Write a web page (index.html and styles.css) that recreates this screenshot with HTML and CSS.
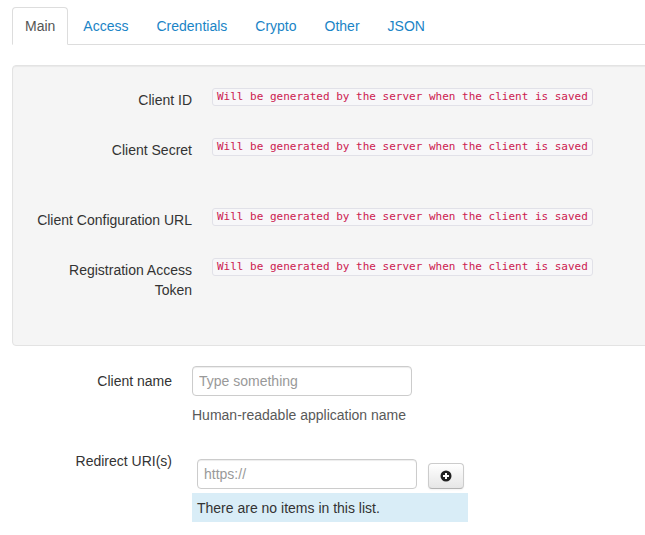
FILE: index.html
```html
<!DOCTYPE html>
<html>
<head>
<meta charset="utf-8">
<link rel="stylesheet" href="styles.css">
</head>
<body>
<div class="page">
  <ul class="tabs">
    <li class="tab active"><a>Main</a></li>
    <li class="tab"><a>Access</a></li>
    <li class="tab"><a>Credentials</a></li>
    <li class="tab"><a>Crypto</a></li>
    <li class="tab"><a>Other</a></li>
    <li class="tab"><a>JSON</a></li>
  </ul>

  <div class="well">
    <div class="row">
      <label class="label">Client ID</label>
      <div class="controls"><code class="code">Will be generated by the server when the client is saved</code></div>
    </div>
    <div class="row row-gap">
      <label class="label">Client Secret</label>
      <div class="controls"><code class="code">Will be generated by the server when the client is saved</code></div>
    </div>
    <div class="row">
      <label class="label">Client Configuration URL</label>
      <div class="controls"><code class="code">Will be generated by the server when the client is saved</code></div>
    </div>
    <div class="row row-last">
      <label class="label">Registration Access Token</label>
      <div class="controls"><code class="code">Will be generated by the server when the client is saved</code></div>
    </div>
  </div>

  <div class="row form-row">
    <label class="label">Client name</label>
    <div class="controls">
      <input class="input" type="text" placeholder="Type something">
      <p class="help">Human-readable application name</p>
    </div>
  </div>

  <div class="row form-row">
    <label class="label">Redirect URI(s)</label>
    <div class="controls">
      <div class="add-row">
        <input class="input" type="text" placeholder="https://">
        <button class="btn" type="button" aria-label="Add">
          <svg width="12" height="12" viewBox="0 0 12 12"><circle cx="6" cy="6" r="5.5" fill="#222"/><path d="M6 3v6M3 6h6" stroke="#fff" stroke-width="2"/></svg>
        </button>
      </div>
      <div class="alert">There are no items in this list.</div>
    </div>
  </div>
</div>
</body>
</html>
```

FILE: styles.css
```css
html, body {
  margin: 0;
  padding: 0;
  overflow: hidden;
  background: #fff;
}
body {
  font-family: "Liberation Sans", Arial, sans-serif;
  font-size: 14px;
  line-height: 20px;
  color: #333;
}
.page {
  width: 720px;
  padding: 7px 0 0 12px;
}
.tabs {
  display: flex;
  list-style: none;
  margin: 0 0 20px;
  padding: 0;
  border-bottom: 1px solid #ddd;
}
.tab {
  margin-bottom: -1px;
}
.tab a {
  display: block;
  padding: 8px 12px;
  line-height: 20px;
  margin-right: 2px;
  border: 1px solid transparent;
  border-radius: 4px 4px 0 0;
  color: #1a84c6;
  cursor: pointer;
}
.tab.active a {
  color: #555;
  background: #fff;
  border-color: #ddd #ddd transparent;
}
.well {
  background: #f5f5f5;
  border: 1px solid #e3e3e3;
  border-radius: 4px;
  box-shadow: inset 0 1px 1px rgba(0,0,0,0.05);
  padding: 19px;
  margin-bottom: 20px;
}
.row {
  display: grid;
  grid-template-columns: 160px 1fr;
  column-gap: 20px;
  min-height: 30px;
  margin-bottom: 20px;
}
.row-gap {
  margin-bottom: 40px;
}
.row-last {
  margin-bottom: 26px;
}
.label {
  padding-top: 5px;
  text-align: right;
  line-height: 20px;
}
.controls {
  min-width: 0;
}
.code {
  display: inline-block;
  margin-top: 2px;
  padding: 2px 4px;
  line-height: 12px;
  font-family: "DejaVu Sans Mono", "Liberation Mono", monospace;
  font-size: 11px;
  color: #cc2050;
  background: #f7f7f9;
  border: 1px solid #e1e1e8;
  border-radius: 3px;
  white-space: nowrap;
}
.input {
  display: block;
  box-sizing: border-box;
  width: 220px;
  height: 30px;
  margin: 0;
  padding: 4px 6px;
  font-family: "Liberation Sans", Arial, sans-serif;
  font-size: 14px;
  line-height: 20px;
  color: #555;
  background: #fff;
  border: 1px solid #ccc;
  border-radius: 4px;
  box-shadow: inset 0 1px 1px rgba(0,0,0,0.075);
}
.input::placeholder {
  color: #999;
}
.help {
  margin: 9px 0 0;
  line-height: 21px;
  color: #595959;
}
.add-row {
  display: flex;
  align-items: flex-end;
  padding: 13px 0 0 5px;
}
.btn {
  box-sizing: border-box;
  width: 36px;
  height: 26px;
  margin: 0 0 0 11px;
  padding: 0;
  display: flex;
  align-items: center;
  justify-content: center;
  background: linear-gradient(#ffffff, #e6e6e6);
  border: 1px solid #cccccc;
  border-bottom-color: #b3b3b3;
  border-radius: 4px;
  box-shadow: inset 0 1px 0 rgba(255,255,255,0.2), 0 1px 2px rgba(0,0,0,0.05);
}
.alert {
  box-sizing: border-box;
  width: 276px;
  margin-top: 4px;
  padding: 5px 5px 4px;
  line-height: 20px;
  background: #d9edf7;
  color: #333;
}
```
